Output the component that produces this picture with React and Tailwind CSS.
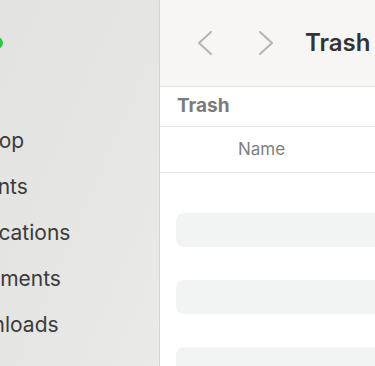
const sidebarItems = ["AirDrop", "Recents", "Applications", "Documents", "Downloads"];

const Chevron = ({ dir }) => (
  <svg width="16" height="26" viewBox="0 0 16 26" fill="none">
    <polyline
      points={dir === "left" ? "14,2 2,13 14,24" : "2,2 14,13 2,24"}
      stroke="#b3b3b3"
      strokeWidth="2"
      strokeLinecap="round"
      strokeLinejoin="round"
    />
  </svg>
);

const App = () => {
  return (
    <div className="w-[375px] h-[366px] flex overflow-hidden font-['Inter',sans-serif]">
      {/* Sidebar */}
      <aside className="w-[160px] shrink-0 h-full overflow-hidden border-r border-[#d4d4d2] bg-gradient-to-br from-[#e3e3e2] via-[#e5e5e3] to-[#eaeae7]">
        <div className="h-[86px] flex items-center">
          <div className="w-[12px] h-[12px] rounded-full bg-[#2bc840] -ml-[9px]" />
        </div>
        <ul className="mt-[32px] -ml-[52px]">
          {sidebarItems.map((item) => (
            <li
              key={item}
              className="h-[46px] flex items-center text-[21px] text-[#3b3b3b] whitespace-nowrap"
            >
              {item}
            </li>
          ))}
        </ul>
      </aside>

      {/* Main */}
      <main className="flex-1 min-w-0 h-full bg-white flex flex-col">
        <div className="h-[87px] shrink-0 bg-[#f7f6f4] border-b border-[#e3e3e1] flex items-center">
          <div className="ml-[37px]">
            <Chevron dir="left" />
          </div>
          <div className="ml-[45px]">
            <Chevron dir="right" />
          </div>
          <span className="ml-[31px] text-[24px] font-semibold text-[#333333] whitespace-nowrap">
            Trash
          </span>
        </div>

        <div className="h-[40px] shrink-0 border-b border-[#e3e3e1] flex items-center pl-[17px]">
          <span className="text-[19px] font-bold text-[#7b7b7b]">Trash</span>
        </div>

        <div className="h-[46px] shrink-0 border-b border-[#e3e3e1] flex items-center pl-[78px]">
          <span className="text-[17px] text-[#7f7f7f]">Name</span>
        </div>

        <div className="flex flex-col gap-[33px] pt-[40px] pl-[16px]">
          <div className="h-[34px] w-[240px] rounded-[8px] bg-[#f2f3f3]" />
          <div className="h-[34px] w-[240px] rounded-[8px] bg-[#f2f3f3]" />
          <div className="h-[34px] w-[240px] rounded-[8px] bg-[#f2f3f3]" />
        </div>
      </main>
    </div>
  );
};

export default App;
